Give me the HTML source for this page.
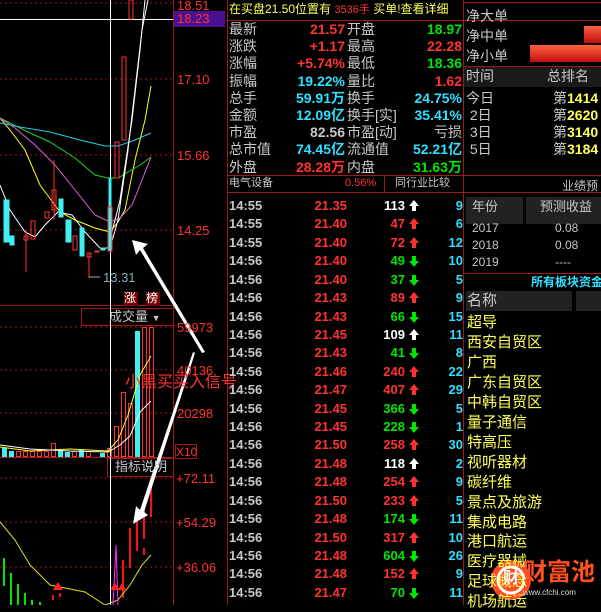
<!DOCTYPE html>
<html><head><meta charset="utf-8"><style>
body{margin:0;width:601px;height:605px;background:#000;overflow:hidden;position:relative;font-family:"Liberation Sans","WenQuanYi Zen Hei","Noto Sans CJK SC",sans-serif;}
.a{position:absolute;white-space:nowrap;line-height:1;}
.g{color:#c8c8c8}.r{color:#ff3232}.gr{color:#00e600}.c{color:#2ee0ff}.y{color:#ffff5a}.w{color:#fff}
.b{font-weight:bold}
</style></head><body>
<svg class="a" style="left:0;top:0" width="601" height="605">
<g stroke="#a01818" stroke-dasharray="2,3" stroke-width="1">
<line x1="0" y1="3" x2="173" y2="3"/><line x1="0" y1="79" x2="173" y2="79"/><line x1="0" y1="155" x2="173" y2="155"/><line x1="0" y1="230" x2="173" y2="230"/>
<line x1="0" y1="327" x2="173" y2="327"/><line x1="0" y1="370" x2="173" y2="370"/><line x1="0" y1="413" x2="173" y2="413"/>
<line x1="0" y1="478" x2="173" y2="478"/><line x1="0" y1="522" x2="173" y2="522"/><line x1="0" y1="567" x2="173" y2="567"/>
</g>
<g stroke="#a01818" fill="none">
<line x1="173.5" y1="0" x2="173.5" y2="605"/><line x1="227.5" y1="0" x2="227.5" y2="605"/>
<line x1="0" y1="305.5" x2="173" y2="305.5"/><line x1="0" y1="457.5" x2="173" y2="457.5"/>
<rect x="81.5" y="308.5" width="92" height="17"/><rect x="107.5" y="458.5" width="66" height="18"/>
<rect x="175.5" y="444.5" width="21" height="14"/>
</g>
<line x1="0" y1="19.5" x2="173" y2="19.5" stroke="#fff"/>
<line x1="110.5" y1="0" x2="110.5" y2="605" stroke="#fff"/>
<rect x="174" y="11" width="51" height="16" fill="#4a1090"/>
<polyline points="0,118 10,130 25,150 40,185 60,212 75,220 95,228 110,232 118,222 125,210 135,160 145,120 151,86" fill="none" stroke="#ffff20"/>
<polyline points="0,118 10,123 30,133 50,142 75,158 95,175 108,178 118,178 128,172 140,165 151,157" fill="none" stroke="#20d020"/>
<polyline points="0,123 20,127 50,132 80,140 105,146 118,146 135,140 151,133" fill="none" stroke="#20d0f0"/>
<polyline points="0,118 15,128 35,145 55,165 75,190 95,215 110,222 120,218 132,205 142,180 151,157" fill="none" stroke="#e060e0"/>
<polyline points="0,185 10,210 25,232 35,237 45,225 58,212 72,215 85,232 100,248 110,248 118,220 128,150 135,90 142,30 148,0" fill="none" stroke="#fff"/>
<polyline points="110,240 120,200 132,120 140,50 145,0" fill="none" stroke="#fff"/>
<g fill="#40f0f0" stroke="#40f0f0">
<rect x="4" y="200" width="5" height="42"/><rect x="10" y="236" width="4" height="9"/><rect x="59" y="199" width="4" height="18"/><rect x="66" y="220" width="5" height="22"/><rect x="80" y="228" width="4" height="28"/><rect x="101" y="248" width="4" height="2"/><rect x="109" y="178" width="2" height="72"/>
</g>
<g fill="none" stroke="#ff3232">
<rect x="24" y="236" width="4" height="4"/><rect x="31" y="221" width="4" height="18"/><rect x="45" y="212" width="4" height="6"/><rect x="52" y="190" width="4" height="20"/><rect x="73" y="236" width="4" height="14"/><rect x="87" y="253" width="4" height="4"/><rect x="95" y="251" width="4" height="1"/><rect x="108" y="207" width="4" height="44"/><rect x="115" y="142" width="4" height="36"/><rect x="122" y="57" width="4" height="83"/><rect x="129" y="0" width="4" height="19"/>
<line x1="26" y1="230" x2="26" y2="272"/><line x1="89" y1="253" x2="89" y2="278"/><line x1="54" y1="160" x2="54" y2="220"/>
</g>
<line x1="89" y1="277" x2="100" y2="277" stroke="#aaa"/>
<rect x="124" y="292" width="14" height="14" fill="#700"/><rect x="146" y="292" width="14" height="14" fill="#700"/>
<g fill="#40f0f0"><rect x="2" y="448" width="5" height="9"/><rect x="9" y="451" width="5" height="6"/><rect x="58" y="450" width="5" height="7"/><rect x="65" y="452" width="5" height="5"/><rect x="79" y="450" width="5" height="7"/><rect x="100" y="453" width="5" height="4"/><rect x="135" y="331" width="5" height="126"/></g>
<g fill="none" stroke="#ff3232"><rect x="16.5" y="451.5" width="4" height="5"/><rect x="23.5" y="451.5" width="4" height="5"/><rect x="30.5" y="451.5" width="4" height="5"/><rect x="37.5" y="451.5" width="4" height="5"/><rect x="44.5" y="451.5" width="4" height="5"/><rect x="51.5" y="443.5" width="4" height="13"/><rect x="72.5" y="451.5" width="4" height="5"/><rect x="86.5" y="451.5" width="4" height="5"/><rect x="107.5" y="448.5" width="4" height="8"/><rect x="114.5" y="426.5" width="4" height="30"/><rect x="121.5" y="392.5" width="4" height="64"/><rect x="128.5" y="403.5" width="4" height="53"/><rect x="142.5" y="327.5" width="4" height="129"/><rect x="149.5" y="327.5" width="4" height="129"/></g>
<polyline points="0,447 30,451 70,449 108,451 118,440 128,415 140,375 151,356" fill="none" stroke="#ffff20"/>
<polyline points="0,445 30,449 70,451 108,452 120,445 130,436 140,412 151,401" fill="none" stroke="#fff"/>
<g stroke="#00e600" stroke-width="2"><line x1="4" y1="558" x2="4" y2="586"/><line x1="11" y1="573" x2="11" y2="605"/><line x1="18" y1="584" x2="18" y2="605"/><line x1="25" y1="593" x2="25" y2="605"/><line x1="32" y1="600" x2="32" y2="605"/><line x1="40" y1="602" x2="40" y2="605"/></g>
<g stroke="#ff1010" stroke-width="2"><line x1="53" y1="595" x2="53" y2="600"/><line x1="60" y1="593" x2="60" y2="597"/><line x1="123" y1="560" x2="123" y2="598"/><line x1="130" y1="528" x2="130" y2="568"/><line x1="137" y1="520" x2="137" y2="551"/><line x1="144" y1="510" x2="144" y2="539"/><line x1="151" y1="487" x2="151" y2="517"/><line x1="144" y1="548" x2="144" y2="555"/></g>
<polyline points="0,522 15,540 30,565 50,585 65,588 85,592 105,605 118,600 130,585 142,565 151,555" fill="none" stroke="#e0e020"/>
<polyline points="113,605 116,545 118,605" fill="none" stroke="#ff30ff"/>
<path d="M53,590 L58,582 L63,590Z M110,590 L115,583 L120,590 Z M118,590 L122,583 L126,590Z" fill="#ff2020"/>
<path d="M132,240 L148,244 L143,248 L205,352 L202,353 L140,250 L136,255Z" fill="#fff"/>
<path d="M133,524 L136,506 L140,510 L193,352 L195,353 L144,512 L148,515Z" fill="#fff"/>
<g stroke="#a01818"><line x1="228" y1="20.5" x2="601" y2="20.5"/><line x1="228" y1="175.5" x2="463" y2="175.5"/><line x1="228" y1="192.5" x2="601" y2="192.5"/><line x1="384.5" y1="175" x2="384.5" y2="192"/><line x1="463.5" y1="0" x2="463.5" y2="605"/><line x1="463" y1="2.5" x2="601" y2="2.5"/><line x1="463" y1="66.5" x2="601" y2="66.5"/><line x1="463" y1="175.5" x2="601" y2="175.5"/><line x1="463" y1="273.5" x2="601" y2="273.5"/></g>
<rect x="464" y="67" width="137" height="20" fill="#1a1a1a"/>
<rect x="466" y="197" width="57" height="27" fill="#222"/><rect x="526" y="197" width="75" height="27" fill="#222"/>
<rect x="466" y="291" width="106" height="20" fill="#222"/><rect x="576" y="291" width="25" height="20" fill="#222"/>
<defs><linearGradient id="gb" x1="0" y1="0" x2="0" y2="1"><stop offset="0" stop-color="#ff6040"/><stop offset="1" stop-color="#c01010"/></linearGradient></defs>
<rect x="584" y="26" width="17" height="17" fill="url(#gb)"/><rect x="530" y="45" width="71" height="17" fill="url(#gb)"/>
<circle cx="511" cy="580" r="20" fill="#ff4a20"/><circle cx="511" cy="580" r="13" fill="none" stroke="#fff" stroke-width="3"/>
</svg>
<div class="a r" style="left:177px;top:-1px;font-size:13px">18.51</div>
<div class="a r" style="left:177px;top:12px;font-size:13px">18.23</div>
<div class="a r" style="left:177px;top:73px;font-size:13px">17.10</div>
<div class="a r" style="left:177px;top:149px;font-size:13px">15.66</div>
<div class="a r" style="left:177px;top:224px;font-size:13px">14.25</div>
<div class="a" style="left:103px;top:271px;font-size:13px;color:#8ab">13.31</div>
<div class="a w" style="left:124px;top:292px;font-size:12px">涨</div><div class="a w" style="left:146px;top:292px;font-size:12px">榜</div>
<div class="a g" style="left:109px;top:310px;font-size:13px">成交量 <span style="font-size:9px">▼</span></div>
<div class="a r" style="left:177px;top:321px;font-size:13px">59973</div>
<div class="a r" style="left:177px;top:364px;font-size:13px">40136</div>
<div class="a r" style="left:177px;top:407px;font-size:13px">20298</div>
<div class="a r" style="left:176px;top:446px;font-size:12px">X10</div>
<div class="a g" style="left:115px;top:460px;font-size:13px">指标说明</div>
<div class="a r" style="left:176px;top:472px;font-size:13px">+72.11</div>
<div class="a r" style="left:176px;top:516px;font-size:13px">+54.29</div>
<div class="a r" style="left:176px;top:561px;font-size:13px">+36.06</div>
<div class="a r" style="left:125px;top:375px;font-size:16px">小黑买买入信号</div>
<div class="a y" style="left:229px;top:3px;font-size:12px">在买盘21.50位置有 <span class="r" style="font-size:11px">3536手</span> 买单!查看详细</div>
<div class="a" style="left:229px;top:21px;width:233px;font-size:14px;line-height:17.2px">
<div><span class="g">最新</span><span class="r b" style="position:absolute;right:117px">21.57</span><span class="g" style="position:absolute;left:118px">开盘</span><span class="gr b" style="position:absolute;right:0">18.97</span></div>
<div><span class="g">涨跌</span><span class="r b" style="position:absolute;right:117px">+1.17</span><span class="g" style="position:absolute;left:118px">最高</span><span class="r b" style="position:absolute;right:0">22.28</span></div>
<div><span class="g">涨幅</span><span class="r b" style="position:absolute;right:117px">+5.74%</span><span class="g" style="position:absolute;left:118px">最低</span><span class="gr b" style="position:absolute;right:0">18.36</span></div>
<div><span class="g">振幅</span><span class="c b" style="position:absolute;right:117px">19.22%</span><span class="g" style="position:absolute;left:118px">量比</span><span class="r b" style="position:absolute;right:0">1.62</span></div>
<div><span class="g">总手</span><span class="c b" style="position:absolute;right:117px">59.91万</span><span class="g" style="position:absolute;left:118px">换手</span><span class="c b" style="position:absolute;right:0">24.75%</span></div>
<div><span class="g">金额</span><span class="c b" style="position:absolute;right:117px">12.09亿</span><span class="g" style="position:absolute;left:118px">换手[实]</span><span class="c b" style="position:absolute;right:0">35.41%</span></div>
<div><span class="g">市盈</span><span class="g b" style="position:absolute;right:117px">82.56</span><span class="g" style="position:absolute;left:118px">市盈[动]</span><span class="g" style="position:absolute;right:0">亏损</span></div>
<div><span class="g">总市值</span><span class="c b" style="position:absolute;right:117px">74.45亿</span><span class="g" style="position:absolute;left:118px">流通值</span><span class="c b" style="position:absolute;right:0">52.21亿</span></div>
<div><span class="g">外盘</span><span class="r b" style="position:absolute;right:117px">28.28万</span><span class="g" style="position:absolute;left:118px">内盘</span><span class="gr b" style="position:absolute;right:0">31.63万</span></div>
</div>
<div class="a g" style="left:229px;top:178px;font-size:11px">电气设备</div>
<div class="a r" style="left:345px;top:178px;font-size:11px">0.56%</div>
<div class="a g" style="left:395px;top:178px;font-size:11px">同行业比较</div>
<div class="a b" style="left:229px;top:197px;width:234px;font-size:13px;line-height:18.43px" id="t"></div>
<script>
var d=[["14:55","21.35","113","w",9],["14:55","21.40","47","r",6],["14:55","21.40","72","r",12],["14:56","21.40","49","g",10],["14:56","21.40","37","g",5],["14:56","21.43","89","r",9],["14:56","21.43","66","g",15],["14:56","21.45","109","w",11],["14:56","21.43","41","g",8],["14:56","21.46","240","r",22],["14:56","21.47","407","r",29],["14:56","21.45","366","g",5],["14:56","21.45","228","g",1],["14:56","21.50","258","r",30],["14:56","21.48","118","w",2],["14:56","21.48","254","r",9],["14:56","21.50","233","r",5],["14:56","21.48","174","g",11],["14:56","21.50","317","r",10],["14:56","21.48","604","g",26],["14:56","21.48","152","r",9],["14:56","21.47","70","g",11]];
var h="",col={w:"#fff",r:"#ff3232",g:"#00e600"};
d.forEach(function(x){var c=col[x[3]];var arrow=x[3]=="g"?
'<span style="position:absolute;left:183px;top:4px;width:4px;height:5px;background:'+c+'"></span><span style="position:absolute;left:180px;top:9px;width:0;height:0;border-left:5px solid transparent;border-right:5px solid transparent;border-top:6px solid '+c+'"></span>':
'<span style="position:absolute;left:180px;top:3px;width:0;height:0;border-left:5px solid transparent;border-right:5px solid transparent;border-bottom:6px solid '+c+'"></span><span style="position:absolute;left:183px;top:9px;width:4px;height:5px;background:'+c+'"></span>';
h+='<div style="position:relative;height:18.43px"><span class="g">'+x[0]+'</span><span class="r" style="position:absolute;right:116px">'+x[1]+'</span><span style="position:absolute;right:58px;color:'+c+'">'+x[2]+'</span>'+arrow+'<span class="c" style="position:absolute;right:0">'+x[4]+'</span></div>'});
document.getElementById("t").innerHTML=h;
</script>
<div class="a g" style="left:466px;top:6px;font-size:14px;line-height:20px">净大单<br>净中单<br>净小单</div>
<div class="a g" style="left:466px;top:69px;font-size:14px">时间</div><div class="a g" style="left:547px;top:69px;font-size:14px">总排名</div>
<div class="a g" style="left:466px;top:90px;font-size:14px;line-height:17px">今日<br>&nbsp;2日<br>&nbsp;3日<br>&nbsp;5日</div>
<div class="a" style="left:553px;top:90px;font-size:14px;line-height:17px"><span class="g">第</span><b class="y">1414</b><br><span class="g">第</span><b class="y">2620</b><br><span class="g">第</span><b class="y">3140</b><br><span class="g">第</span><b class="y">3184</b></div>
<div class="a g" style="left:562px;top:180px;font-size:12px">业绩预</div>
<div class="a g" style="left:472px;top:200px;font-size:13px">年份</div><div class="a g" style="left:540px;top:200px;font-size:13px">预测收益</div>
<div class="a g" style="left:472px;top:220px;font-size:12px;line-height:17px">2017<br>2018<br>2019</div>
<div class="a g" style="left:555px;top:220px;font-size:12px;line-height:17px">0.08<br>0.08<br>----</div>
<div class="a c b" style="left:531px;top:276px;font-size:12px">所有板块资金</div>
<div class="a g" style="left:467px;top:293px;font-size:15px">名称</div>
<div class="a y" style="left:467px;top:313px;font-size:15px;line-height:19.95px">超导<br>西安自贸区<br>广西<br>广东自贸区<br>中韩自贸区<br>量子通信<br>特高压<br>视听器材<br>碳纤维<br>景点及旅游<br>集成电路<br>港口航运<br>医疗器械<br>足球概念<br>机场航运</div>
<div class="a w b" style="left:503px;top:571px;font-size:16px">财</div>
<div class="a b" style="left:523px;top:561px;font-size:24px;color:#ff5020">财富池</div>
<div class="a" style="left:523px;top:589px;font-size:8px;color:#ddd">www.cfchi.com</div>
</body></html>
